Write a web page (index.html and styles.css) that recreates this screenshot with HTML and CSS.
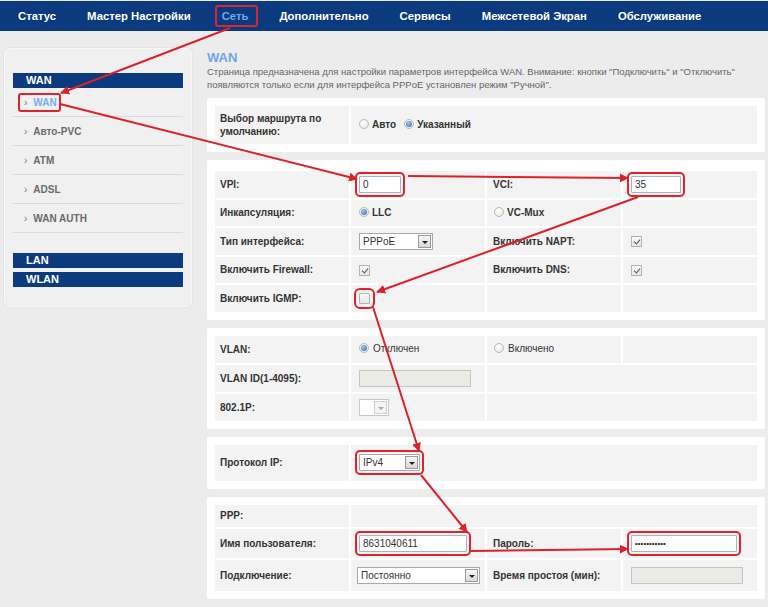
FILE: index.html
```html
<!DOCTYPE html>
<html lang="ru">
<head>
<meta charset="utf-8">
<title>WAN</title>
<link rel="stylesheet" href="styles.css">
</head>
<body>
<nav class="topnav">
  <a>Статус</a>
  <a>Мастер Настройки</a>
  <a class="active"><span class="nav-hl">Сеть</span></a>
  <a>Дополнительно</a>
  <a>Сервисы</a>
  <a>Межсетевой Экран</a>
  <a>Обслуживание</a>
</nav>
<div class="layout">
  <aside class="sidebar">
    <div class="side-head">WAN</div>
    <ul class="side-list">
      <li class="active"><span class="side-hl"><span class="chev">›</span>WAN</span></li>
      <li><span class="chev">›</span>Авто-PVC</li>
      <li><span class="chev">›</span>ATM</li>
      <li><span class="chev">›</span>ADSL</li>
      <li><span class="chev">›</span>WAN AUTH</li>
    </ul>
    <div class="side-head">LAN</div>
    <div class="side-head">WLAN</div>
  </aside>
  <main class="content">
    <h1 class="title">WAN</h1>
    <p class="desc">Страница предназначена для настройки параметров интерфейса WAN. Внимание: кнопки "Подключить" и "Отключить"<br>появляются только если для интерфейса PPPoE установлен режим "Ручной".</p>

    <section class="panel">
      <table class="grid">
        <colgroup><col><col><col><col></colgroup>
        <tr class="h38">
          <td class="lbl two">Выбор маршрута по<br>умолчанию:</td>
          <td colspan="3" class="ctl"><span class="opt"><span class="radio"></span>Авто</span><span class="opt"><span class="radio on"></span>Указанный</span></td>
        </tr>
      </table>
    </section>

    <section class="panel p2">
      <table class="grid">
        <colgroup><col><col><col><col></colgroup>
        <tr>
          <td class="lbl">VPI:</td>
          <td class="ctl"><input class="field w42 hl" type="text" value="0"></td>
          <td class="lbl c3">VCI:</td>
          <td class="ctl"><input class="field w50 hl" type="text" value="35"></td>
        </tr>
        <tr>
          <td class="lbl">Инкапсуляция:</td>
          <td class="ctl"><span class="opt"><span class="radio on"></span>LLC</span></td>
          <td class="ctl c3r"><span class="opt"><span class="radio"></span>VC-Mux</span></td>
          <td></td>
        </tr>
        <tr>
          <td class="lbl">Тип интерфейса:</td>
          <td class="ctl"><span class="select w74"><span class="sel-text">PPPoE</span><span class="sel-btn"></span></span></td>
          <td class="lbl c3">Включить NAPT:</td>
          <td class="ctl"><span class="check on"></span></td>
        </tr>
        <tr>
          <td class="lbl">Включить Firewall:</td>
          <td class="ctl"><span class="check on"></span></td>
          <td class="lbl c3">Включить DNS:</td>
          <td class="ctl"><span class="check on"></span></td>
        </tr>
        <tr>
          <td class="lbl">Включить IGMP:</td>
          <td class="ctl"><span class="check hl-box"></span></td>
          <td></td>
          <td></td>
        </tr>
      </table>
    </section>

    <section class="panel">
      <table class="grid">
        <colgroup><col><col><col><col></colgroup>
        <tr class="h27">
          <td class="lbl">VLAN:</td>
          <td class="ctl"><span class="opt normal"><span class="radio on"></span>Отключен</span></td>
          <td class="ctl c3r"><span class="opt normal"><span class="radio"></span>Включено</span></td>
          <td></td>
        </tr>
        <tr class="h27">
          <td class="lbl">VLAN ID(1-4095):</td>
          <td class="ctl"><input class="field w112 off" type="text" value="" disabled></td>
          <td colspan="2"></td>
        </tr>
        <tr class="h27">
          <td class="lbl">802.1P:</td>
          <td class="ctl"><span class="select w30 dis"><span class="sel-text"></span><span class="sel-btn"></span></span></td>
          <td colspan="2"></td>
        </tr>
      </table>
    </section>

    <section class="panel">
      <table class="grid">
        <colgroup><col><col><col><col></colgroup>
        <tr class="h36">
          <td class="lbl">Протокол IP:</td>
          <td colspan="3" class="ctl"><span class="select w61 hl"><span class="sel-text">IPv4</span><span class="sel-btn"></span></span></td>
        </tr>
      </table>
    </section>

    <section class="panel">
      <table class="grid">
        <colgroup><col><col><col><col></colgroup>
        <tr class="h22">
          <td class="lbl">PPP:</td>
          <td colspan="3"></td>
        </tr>
        <tr class="h29">
          <td class="lbl">Имя пользователя:</td>
          <td class="ctl"><input class="field w108 hl" type="text" value="8631040611"></td>
          <td class="lbl c3">Пароль:</td>
          <td class="ctl"><input class="field w106 hl pw" type="text" value="•••••••••••" aria-label="Пароль"></td>
        </tr>
        <tr class="h31">
          <td class="lbl">Подключение:</td>
          <td class="ctl tight"><span class="select w123"><span class="sel-text">Постоянно</span><span class="sel-btn"></span></span></td>
          <td class="lbl c3">Время простоя (мин):</td>
          <td class="ctl"><input class="field w112 off" type="text" value="" disabled></td>
        </tr>
      </table>
    </section>
  </main>
</div>

<svg class="arrows" width="768" height="607" viewBox="0 0 768 607" aria-hidden="true">
  <defs>
    <marker id="ah" viewBox="0 0 10 10" refX="9" refY="5" markerWidth="4.5" markerHeight="4.5" orient="auto">
      <path d="M0 0 L10 5 L0 10 z" fill="#d9232b"/>
    </marker>
  </defs>
  <g stroke="#d9232b" stroke-width="2" fill="none" marker-end="url(#ah)">
    <line x1="230" y1="28" x2="61" y2="93"/>
    <line x1="60" y1="104" x2="357" y2="179"/>
    <line x1="408" y1="176" x2="628" y2="178"/>
    <line x1="638" y1="197" x2="377" y2="292"/>
    <line x1="373" y1="307" x2="419" y2="451"/>
    <line x1="421" y1="475" x2="467" y2="532"/>
    <line x1="471" y1="551" x2="628" y2="549"/>
  </g>
</svg>
</body>
</html>
```
FILE: styles.css
```css
* { box-sizing: border-box; }
html, body { margin: 0; padding: 0; }
body {
  background: #ececec;
  font-family: "Liberation Sans", Arial, sans-serif;
  color: #333;
  width: 768px;
  height: 607px;
  overflow: hidden;
  position: relative;
}

/* top navigation */
.topnav {
  margin-top: 1px;
  height: 30px;
  background: #0b3a7e;
  display: flex;
  align-items: center;
  padding-left: 18px;
  gap: 31px;
}
.topnav a {
  color: #fff;
  font-weight: bold;
  font-size: 11.3px;
  line-height: 14px;
  text-decoration: none;
  white-space: nowrap;
}
.topnav a.active { color: #6ea8f0; }
.nav-hl {
  display: inline-block;
  padding: 2px 8px 2px 5px;
  margin: -4px -10px -4px -7px;
  border: 2px solid #d9262c;
  border-radius: 3px;
}

/* layout */
.layout {
  display: flex;
  align-items: flex-start;
  gap: 15px;
  padding: 17px 0 0 4px;
}

/* sidebar */
.sidebar {
  width: 188px;
  flex: none;
  background: #f0f0f0;
  border: 1px solid #f8f8f8;
  box-shadow: 0 0 0 1px #e4e4e4;
  border-radius: 6px;
  padding: 24px 8px 19px 8px;
}
.side-head {
  height: 15px;
  line-height: 15px;
  background: #0b3a7e;
  color: #fff;
  font-weight: bold;
  font-size: 11px;
  padding-left: 13px;
}
.side-head + .side-head { margin-top: 4px; }
.side-list {
  list-style: none;
  margin: 0 0 20px;
  padding: 0;
}
.side-list li {
  height: 29px;
  border-bottom: 1px solid #dadada;
  font-size: 10px;
  font-weight: bold;
  color: #6a6a6a;
  padding-left: 11px;
  display: flex;
  align-items: center;
}
.side-list li.active { color: #78aef0; }
.chev {
  font-weight: normal;
  color: #777;
  margin-right: 6px;
}
.side-hl {
  display: inline-flex;
  align-items: center;
  padding: 2px 2px 2px 4px;
  margin: 0 -4px 0 -6px;
  border: 2px solid #d9262c;
  border-radius: 3px;
}

/* content */
.content {
  width: 558px;
  flex: none;
}
.title {
  margin: 2px 0 0;
  font-size: 13px;
  font-weight: bold;
  color: #6ea6ec;
  line-height: 15px;
}
.desc {
  margin: 0 0 7px;
  font-size: 9.5px;
  line-height: 13px;
  color: #666;
  white-space: nowrap;
}
.panel {
  background: #fff;
  padding: 6px;
  margin-bottom: 8px;
  border-radius: 2px;
}
.panel.p2 { padding-top: 9px; }
.grid {
  width: 100%;
  table-layout: fixed;
  border-collapse: separate;
  border-spacing: 2px;
}
.grid col { width: 25%; }
.grid td {
  background: #f3f3f3;
  font-size: 10px;
  height: 26.5px;
  padding: 0 0 0 5px;
  vertical-align: middle;
  white-space: nowrap;
}
.grid tr.h38 td { height: 38px; }
.grid tr.h27 td { height: 27px; }
.grid tr.h36 td { height: 36px; }
.grid tr.h22 td { height: 22px; }
.grid tr.h29 td { height: 29px; }
.grid tr.h31 td { height: 31px; }
.grid td.lbl { font-weight: bold; color: #333; }
.grid td.two { line-height: 13px; }
.grid td.ctl { padding-left: 8px; }
.grid td.ctl.tight { padding-left: 6px; }
.grid td.c3 { padding-left: 6px; }
.grid td.ctl.c3r { padding-left: 7px; }

/* controls */
.opt {
  display: inline-flex;
  align-items: center;
  gap: 3px;
  font-weight: bold;
  margin-right: 8px;
  color: #333;
}
.opt.normal { font-weight: normal; gap: 4px; }
.radio {
  display: inline-block;
  width: 10px;
  height: 10px;
  border-radius: 50%;
  border: 1px solid #b9b9b9;
  background: radial-gradient(circle at 40% 35%, #fff, #e2e2e2);
  position: relative;
}
.radio.on::after {
  content: "";
  position: absolute;
  inset: 1px;
  border-radius: 50%;
  background: radial-gradient(circle at 40% 35%, #9cc8f0, #2d67aa);
}
.check {
  display: inline-block;
  width: 11px;
  height: 11px;
  border: 1px solid #b3b3b3;
  background: linear-gradient(#fafafa, #e6e6e6);
  position: relative;
  vertical-align: middle;
}
.check.on::after {
  content: "";
  position: absolute;
  left: 3px;
  top: 1px;
  width: 3px;
  height: 5px;
  border: solid #555;
  border-width: 0 1px 1px 0;
  transform: rotate(40deg);
}
.field {
  height: 17px;
  border: 1px solid #a3b3c8;
  background: #fff;
  font: 10px "Liberation Sans", Arial, sans-serif;
  color: #333;
  padding: 0 3px;
  margin: 0;
  vertical-align: middle;
}
.field.off {
  background: #ebebe6;
  border-color: #c5c5c5;
}
.field.pw { font-size: 8px; color: #222; }
.w42 { width: 42px; }
.w50 { width: 50px; }
.w106 { width: 106px; }
.w108 { width: 108px; }
.w112 { width: 112px; }
.hl {
  outline: 2px solid #d9262c;
  outline-offset: 2px;
  border-radius: 1px;
}
.hl-box {
  outline: 2px solid #d9262c;
  outline-offset: 3px;
  border-radius: 1px;
}

.select {
  display: inline-flex;
  align-items: stretch;
  height: 17px;
  border: 1px solid #a9a9a9;
  background: #fff;
  vertical-align: middle;
}
.select.w74 { width: 74px; }
.select.w61 { width: 61px; }
.select.w30 { width: 30px; }
.select.w123 { width: 123px; }
.sel-text {
  flex: 1;
  padding-left: 3px;
  font-size: 10px;
  line-height: 15px;
  color: #333;
}
.sel-btn {
  width: 13px;
  margin: 1px;
  border: 1px solid #9a9a9a;
  background: linear-gradient(#f7f7f7, #d8d8d8);
  position: relative;
}
.sel-btn::after {
  content: "";
  position: absolute;
  left: 3px;
  top: 5px;
  border-left: 3px solid transparent;
  border-right: 3px solid transparent;
  border-top: 3px solid #222;
}
.select.dis { border-color: #c8c8c8; }
.select.dis .sel-btn { border-color: #d0d0d0; background: #f4f4f4; }
.select.dis .sel-btn::after { border-top-color: #aaa; }

/* annotation arrows */
.arrows {
  position: absolute;
  left: 0;
  top: 0;
  pointer-events: none;
}
```
